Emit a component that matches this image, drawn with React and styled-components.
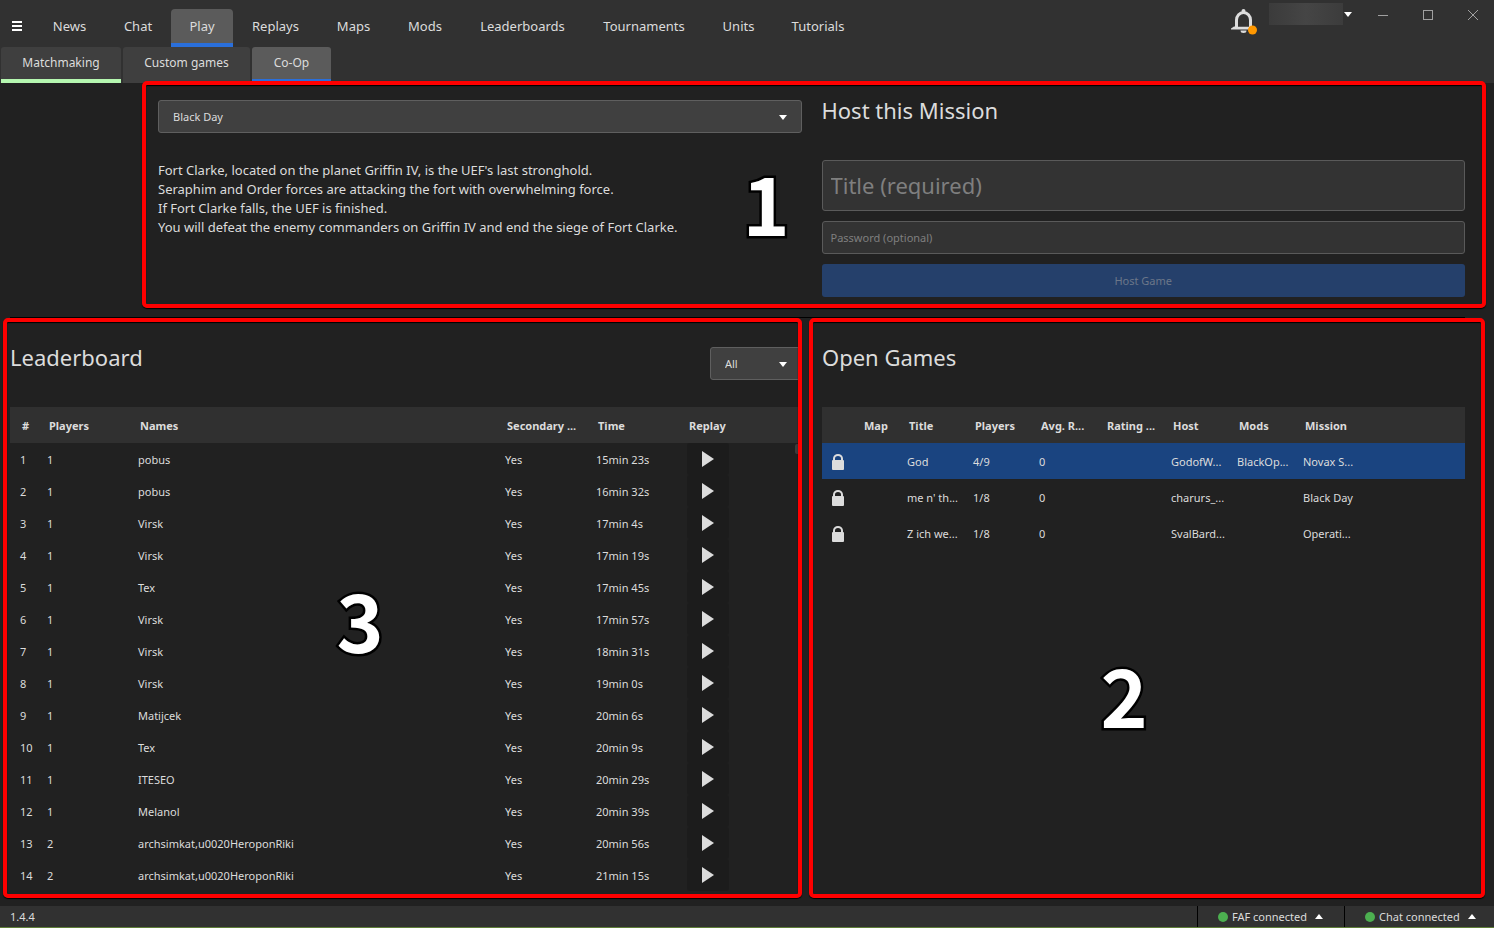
import React from "react";
import styled, { createGlobalStyle, css } from "styled-components";

const GlobalStyle = createGlobalStyle`
  * { box-sizing: border-box; }
  html, body, #root { height: 100%; }
  body {
    margin: 0;
    background: #212121;
    color: #dcdcdc;
    font-family: "Noto Sans", "Open Sans", sans-serif;
    font-size: 11px;
  }
  button, input, select { font: inherit; color: inherit; margin: 0; }
`;

const Window = styled.div`
  display: flex;
  flex-direction: column;
  min-height: 100vh;
  overflow: hidden;
`;

const TitleBar = styled.header`
  display: flex;
  align-items: flex-start;
  height: 47px;
  background: #313131;
`;

const MenuButton = styled.button`
  display: flex;
  align-items: center;
  width: 34px;
  height: 36px;
  margin-top: 8px;
  padding: 0 0 0 12px;
  border: 0;
  background: none;
`;

const MainNav = styled.nav`
  display: flex;
  padding-top: 9px;
  flex: 1;
`;

const NavTab = styled.button`
  width: ${(p) => p.$width}px;
  height: 38px;
  padding: 0;
  border: 0;
  border-bottom: 4px solid ${(p) => (p.$active ? "#2a6fdb" : "transparent")};
  border-radius: 4px 4px 0 0;
  background: ${(p) => (p.$active ? "#5b5b5b" : "none")};
  font-size: 13px;
  line-height: 32px;
  white-space: nowrap;
`;

const AccountArea = styled.div`
  display: flex;
  align-items: flex-start;
  padding-top: 3px;
`;

const BellButton = styled.button`
  width: 28px;
  height: 28px;
  margin: 5px 10px 0 0;
  padding: 0;
  border: 0;
  background: none;
`;

const UserButton = styled.button`
  display: flex;
  align-items: center;
  gap: 1px;
  height: 22px;
  padding: 0;
  border: 0;
  background: none;
`;

const UserName = styled.span`
  width: 74px;
  height: 22px;
  background: linear-gradient(90deg, #3b3b3b, #454545 50%, #3c3c3c);
`;

const WindowButtons = styled.div`
  display: flex;
  gap: 2px;
  margin-left: 9px;
`;

const WindowButton = styled.button`
  display: grid;
  place-items: center;
  width: 43px;
  height: 24px;
  padding: 0;
  border: 0;
  background: none;
`;

const SubTabs = styled.nav`
  display: flex;
  gap: 2px;
  height: 36px;
  padding-left: 1px;
  background: #313131;
`;

const SubTab = styled.button`
  width: ${(p) => p.$width}px;
  height: 36px;
  padding: 0;
  border: 0;
  border-bottom: 4px solid ${(p) => p.$line || "#3f3f3f"};
  border-radius: 3px 3px 0 0;
  background: ${(p) => (p.$active ? "#5b5b5b" : "#3f3f3f")};
  font-size: 12px;
  line-height: 32px;
  white-space: nowrap;
`;

const MissionPanel = styled.section`
  position: relative;
  display: grid;
  grid-template-columns: 128px minmax(0, 1fr) minmax(0, 1fr);
  gap: 20px;
  height: 234px;
  padding: 17px 29px 0 10px;
`;

const MissionColumn = styled.div`
  grid-column: 2;
  display: flex;
  flex-direction: column;
  gap: 28px;
`;

const HostForm = styled.form`
  display: flex;
  flex-direction: column;
  gap: 10px;
`;

const Heading = styled.h2`
  margin: 0;
  font-size: 22px;
  font-weight: 400;
  line-height: 28px;
`;

const HostHeading = styled(Heading)`
  height: 50px;
  line-height: 20px;
`;

const SelectBox = styled.div`
  position: relative;
  width: ${(p) => p.$width || "100%"};

  svg { position: absolute; right: 15px; top: 15px; pointer-events: none; }
`;

const Select = styled.select`
  display: block;
  width: 100%;
  height: 33px;
  padding: 0 30px 0 14px;
  border: 1px solid #5f5f5f;
  border-radius: 3px;
  background: #404040;
  appearance: none;
`;

const Description = styled.p`
  margin: 0;
  font-size: 13px;
  line-height: 19px;
  white-space: pre-line;
`;

const field = css`
  display: block;
  width: 100%;
  padding: 0 8px;
  border: 1px solid #5a5a5a;
  border-radius: 3px;
  background: #333333;
  &::placeholder { color: #7f7f7f; opacity: 1; }
`;

const TitleInput = styled.input`
  ${field}
  height: 51px;
  padding-bottom: 2px;
  font-size: 22px;
`;

const PasswordInput = styled.input`
  ${field}
  height: 33px;
`;

const HostButton = styled.button`
  height: 33px;
  border: 0;
  border-radius: 3px;
  background: #25406b;
  color: #6c7789;
`;

const Divider = styled.hr`
  width: auto;
  height: 1px;
  margin: 0 29px 0 10px;
  border: 0;
  background: #000000;
`;

const LowerArea = styled.div`
  display: grid;
  grid-template-columns: minmax(0, 792fr) minmax(0, 643fr);
  gap: 20px;
  flex: 1;
  padding: 0 29px 0 10px;
`;

const ListPanel = styled.section`
  position: relative;
  padding-top: 25px;
`;

const PanelHeader = styled.div`
  display: flex;
  justify-content: space-between;
  height: 64px;

  ${SelectBox} { margin-top: 4px; }
`;

const DataTable = styled.table`
  width: 100%;
  table-layout: fixed;
  border-collapse: collapse;
`;

const HeadCell = styled.th`
  height: 36px;
  padding: 0 0 0 12px;
  background: #303030;
  text-align: left;
  font-weight: 700;
  white-space: nowrap;
`;

const Row = styled.tr`
  height: ${(p) => p.$height}px;
  background: ${(p) => (p.$selected ? "#1a4480" : "none")};
`;

const Cell = styled.td`
  padding: 2px 0 0 10px;
  line-height: 16px;
  white-space: nowrap;
  overflow: hidden;

  svg { display: block; }
`;

const ReplayCell = styled(Cell)`
  padding-top: 0;
`;

const ReplayButton = styled.button`
  display: grid;
  place-items: center;
  width: 42px;
  height: 32px;
  padding: 0;
  border: 0;
  border-radius: 3px;
  background: #1c1c1c;
`;

const ScrollThumb = styled.div`
  position: absolute;
  top: 126px;
  right: 0;
  width: 7px;
  height: 10px;
  border-radius: 2px;
  background: #3d3d3d;
`;

const Callout = styled.div`
  position: absolute;
  inset: ${(p) => p.$inset};
  border: 4px solid #ff0000;
  border-radius: 5px;
  box-shadow: 0 1px 1px #000000, inset 0 1px 1px #000000;
  pointer-events: none;
`;

const CalloutNumber = styled.span`
  position: absolute;
  left: ${(p) => p.$left};
  top: ${(p) => p.$top};
  transform: translate(-50%, -50%);
  color: #ffffff;
  font-family: "Noto Sans CJK JP", sans-serif;
  font-size: 80px;
  font-weight: 700;
  line-height: 80px;
  -webkit-text-stroke: 5px #000000;
  paint-order: stroke fill;
`;

const StatusBar = styled.footer`
  display: flex;
  height: 22px;
  border-bottom: 1px solid #5f7f38;
  background: #313131;
`;

const Version = styled.span`
  flex: 1;
  padding-left: 10px;
  line-height: 21px;
`;

const StatusButton = styled.button`
  display: flex;
  align-items: center;
  width: ${(p) => p.$width}px;
  padding: 0 0 0 20px;
  border: 0;
  border-left: 1px solid #000000;
  background: none;
  white-space: nowrap;

  svg { margin-left: 8px; }
`;

const StatusDot = styled.span`
  width: 10px;
  height: 10px;
  margin-right: 4px;
  border-radius: 50%;
  background: #4caf50;
`;

const NAV = [
  ["News", 71], ["Chat", 66], ["Play", 62], ["Replays", 85], ["Maps", 71],
  ["Mods", 72], ["Leaderboards", 123], ["Tournaments", 120], ["Units", 69], ["Tutorials", 90],
];

const SCORES = [
  [1, "pobus", "15min 23s"], [1, "pobus", "16min 32s"], [1, "Virsk", "17min 4s"],
  [1, "Virsk", "17min 19s"], [1, "Tex", "17min 45s"], [1, "Virsk", "17min 57s"],
  [1, "Virsk", "18min 31s"], [1, "Virsk", "19min 0s"], [1, "Matijcek", "20min 6s"],
  [1, "Tex", "20min 9s"], [1, "ITESEO", "20min 29s"], [1, "Melanol", "20min 39s"],
  [2, "archsimkat,u0020HeroponRiki", "20min 56s"],
  [2, "archsimkat,u0020HeroponRiki", "21min 15s"],
];

const GAME_COLUMNS = ["", "Map", "Title", "Players", "Avg. R...", "Rating ...", "Host", "Mods", "Mission"];
const GAMES = [
  ["God", "4/9", "0", "", "GodofW...", "BlackOp...", "Novax S..."],
  ["me n' th...", "1/8", "0", "", "charurs_...", "", "Black Day"],
  ["Z ich we...", "1/8", "0", "", "SvalBard...", "", "Operati..."],
];

const Caret = ({ up }) => (
  <svg width="8" height="5" viewBox="0 0 8 5" aria-hidden="true">
    <path d={up ? "M0 5 4 0 8 5Z" : "M0 0H8L4 5Z"} fill="#fff" />
  </svg>
);

const Lock = () => (
  <svg width="12" height="16" viewBox="0 0 12 16" role="img" aria-label="Locked">
    <path d="M2 7V4.5a4 3.500 0 0 1 8 0V7" fill="none" stroke="#dcdcdc" strokeWidth="2" />
    <rect x="0" y="6" width="12" height="10" rx="1" fill="#dcdcdc" />
  </svg>
);

const Bell = () => (
  <svg width="28" height="28" viewBox="0 0 28 28" aria-hidden="true">
    <path d="M5.500 19.500V12a6.500 7 0 0 1 14 0v7.500" fill="none" stroke="#dcdcdc" strokeWidth="3" />
    <path d="M0 21.500v-1l3-2h19l3 2v1Z" fill="#dcdcdc" />
    <path d="M7 16h11v2.500H7Z" fill="#313131" />
    <circle cx="12.500" cy="3" r="2" fill="#dcdcdc" />
    <path d="M9.500 22.500h6a3 2.500 0 0 1-6 0Z" fill="#dcdcdc" />
    <circle cx="21.500" cy="22" r="4.500" fill="#ff9800" />
  </svg>
);

export default function App() {
  return (
    <Window>
      <GlobalStyle />
      <TitleBar>
        <MenuButton aria-label="Menu">
          <svg width="10" height="10" viewBox="0 0 10 10" aria-hidden="true">
            <path d="M0 0H10V2H0ZM0 4H10V6H0ZM0 8H10V10H0Z" fill="#fff" />
          </svg>
        </MenuButton>
        <MainNav aria-label="Main">
          {NAV.map(([label, width]) => (
            <NavTab key={label} $width={width} $active={label === "Play"}>{label}</NavTab>
          ))}
        </MainNav>
        <AccountArea>
          <BellButton aria-label="Notifications"><Bell /></BellButton>
          <UserButton aria-label="Account"><UserName /><Caret /></UserButton>
          <WindowButtons>
            <WindowButton aria-label="Minimize">
              <svg width="10" height="10"><path d="M0 5.500H10" stroke="#a0a0a0" /></svg>
            </WindowButton>
            <WindowButton aria-label="Maximize">
              <svg width="10" height="10"><rect x=".5" y=".5" width="9" height="9" fill="none" stroke="#a0a0a0" /></svg>
            </WindowButton>
            <WindowButton aria-label="Close">
              <svg width="10" height="10"><path d="M0 0 10 10M10 0 0 10" stroke="#a0a0a0" /></svg>
            </WindowButton>
          </WindowButtons>
        </AccountArea>
      </TitleBar>
      <SubTabs aria-label="Play">
        <SubTab $width={120} $line="#b5f7b0">Matchmaking</SubTab>
        <SubTab $width={127}>Custom games</SubTab>
        <SubTab $width={79} $active $line="#2a6fdb">Co-Op</SubTab>
      </SubTabs>

      <MissionPanel>
        <MissionColumn>
          <SelectBox>
            <Select aria-label="Mission"><option>Black Day</option></Select>
            <Caret />
          </SelectBox>
          <Description>
            {"Fort Clarke, located on the planet Griffin IV, is the UEF's last stronghold.\nSeraphim and Order forces are attacking the fort with overwhelming force.\nIf Fort Clarke falls, the UEF is finished.\nYou will defeat the enemy commanders on Griffin IV and end the siege of Fort Clarke."}
          </Description>
        </MissionColumn>
        <HostForm>
          <HostHeading>Host this Mission</HostHeading>
          <TitleInput aria-label="Title" placeholder="Title (required)" />
          <PasswordInput aria-label="Password" placeholder="Password (optional)" />
          <HostButton type="button" disabled>Host Game</HostButton>
        </HostForm>
        <Callout $inset="-2px 8px 9px 142px" />
        <CalloutNumber $left="766px" $top="118px">1</CalloutNumber>
      </MissionPanel>

      <Divider />

      <LowerArea>
        <ListPanel>
          <PanelHeader>
            <Heading>Leaderboard</Heading>
            <SelectBox $width="92px">
              <Select aria-label="Player count"><option>All</option></Select>
              <Caret />
            </SelectBox>
          </PanelHeader>
          <DataTable>
            <colgroup>
              <col width="27" /><col width="91" /><col /><col width="91" /><col width="91" /><col width="125" />
            </colgroup>
            <thead>
              <tr>
                {["#", "Players", "Names", "Secondary ...", "Time", "Replay"].map((h) => (
                  <HeadCell key={h} scope="col">{h}</HeadCell>
                ))}
              </tr>
            </thead>
            <tbody>
              {SCORES.map(([players, names, time], i) => (
                <Row key={i} $height={32}>
                  <Cell>{i + 1}</Cell>
                  <Cell>{players}</Cell>
                  <Cell>{names}</Cell>
                  <Cell>Yes</Cell>
                  <Cell>{time}</Cell>
                  <ReplayCell>
                    <ReplayButton aria-label={`Watch replay ${i + 1}`}>
                      <svg width="12" height="16" viewBox="0 0 12 16"><path d="M0 0 12 8 0 16Z" fill="#dcdcdc" /></svg>
                    </ReplayButton>
                  </ReplayCell>
                </Row>
              ))}
            </tbody>
          </DataTable>
          <ScrollThumb />
          <Callout $inset="0 0 8px -7px" />
          <CalloutNumber $left="350px" $top="300px">3</CalloutNumber>
        </ListPanel>

        <ListPanel>
          <PanelHeader><Heading>Open Games</Heading></PanelHeader>
          <DataTable>
            <colgroup>
              <col width="30" /><col width="45" /><col width="66" /><col width="66" /><col width="66" />
              <col width="66" /><col width="66" /><col width="66" /><col />
            </colgroup>
            <thead>
              <tr>
                {GAME_COLUMNS.map((h, i) => (
                  <HeadCell key={i} scope="col">{h}</HeadCell>
                ))}
              </tr>
            </thead>
            <tbody>
              {GAMES.map((game, i) => (
                <Row key={i} $height={36} $selected={i === 0}>
                  <Cell><Lock /></Cell>
                  <Cell />
                  {game.map((value, j) => <Cell key={j}>{value}</Cell>)}
                </Row>
              ))}
            </tbody>
          </DataTable>
          <Callout $inset="0 -20px 8px -13px" />
          <CalloutNumber $left="302px" $top="375px">2</CalloutNumber>
        </ListPanel>
      </LowerArea>

      <StatusBar>
        <Version>1.4.4</Version>
        <StatusButton $width={147}><StatusDot />FAF connected<Caret up /></StatusButton>
        <StatusButton $width={150}><StatusDot />Chat connected<Caret up /></StatusButton>
      </StatusBar>
    </Window>
  );
}
